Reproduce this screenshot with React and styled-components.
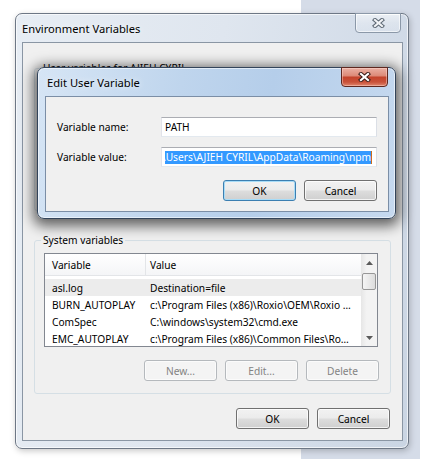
import React from "react"
import styled, { createGlobalStyle } from "styled-components"

const uiFont = `"Segoe UI", "Noto Sans", "Liberation Sans", sans-serif`

const systemVars = [
  ["asl.log", "Destination=file", true],
  ["BURN_AUTOPLAY", "c:\\Program Files (x86)\\Roxio\\OEM\\Roxio Burn\\RoxioBurnLauncher.exe"],
  ["ComSpec", "C:\\windows\\system32\\cmd.exe"],
  ["EMC_AUTOPLAY", "c:\\Program Files (x86)\\Common Files\\Roxio Shared\\OEM\\Autorun.exe"],
]

const GlobalStyle = createGlobalStyle`
  html, body {
    margin: 0;
    padding: 0;
  }
  body {
    background: #fff;
    font-family: ${uiFont};
    font-size: 10.2px;
    color: #000;
  }
`

// what shows of the desktop: white, with another window peeking behind on the right
const Desktop = styled.div`
  position: relative;
  width: 423px;
  height: 459px;
  overflow: hidden;
  background: linear-gradient(to right, #fff 0, #fff 301px, #d5dce8 301px, #d5dce8 420px, #fff 420px);
`

const WindowFrame = styled.div`
  position: absolute;
  left: ${p => p.$x}px;
  top: ${p => p.$y}px;
  width: ${p => p.$w}px;
  height: ${p => p.$h}px;
  box-sizing: border-box;
  display: flex;
  flex-direction: column;
  padding: 0 ${p => p.$pr}px ${p => p.$pb}px ${p => p.$pl}px;
  border-radius: 7px;
  border: 1px solid ${p => (p.$active ? "#33445a" : "#6d7785")};
  background: ${p =>
    p.$active
      ? "linear-gradient(100deg, #d6e5f5 0%, #bfd5ed 38%, #b5ceea 62%, #c6d9ef 100%)"
      : "linear-gradient(100deg, #e7edf4 0%, #dfe6ef 45%, #d4dde9 75%, #cad5e3 100%)"};
  box-shadow: ${p =>
    p.$active
      ? "inset 0 0 0 1px rgba(255,255,255,0.55), 0 3px 13px 4px rgba(0,0,0,0.6)"
      : "inset 0 0 0 1px rgba(255,255,255,0.65), 1px 2px 6px rgba(0,0,0,0.22)"};
`

const TitleBar = styled.div`
  flex: none;
  height: 28px;
  display: flex;
  align-items: center;
`

const Title = styled.span`
  padding-left: ${p => p.$indent || 0}px;
  font-size: 11.2px;
  color: #000;
  text-shadow: 0 0 6px rgba(255, 255, 255, 0.9);
  white-space: nowrap;
`

const CloseButton = styled.div`
  align-self: flex-start;
  margin: -1px ${p => p.$mr}px 0 auto;
  width: ${p => p.$w}px;
  height: 20px;
  box-sizing: border-box;
  display: flex;
  align-items: center;
  justify-content: center;
  border-radius: 0 0 4px 4px;
  border: 1px solid ${p => (p.$active ? "#5e2820" : "#8b98a8")};
  background: ${p =>
    p.$active
      ? "linear-gradient(#eab0a3 0%, #dd8b79 42%, #c4442c 52%, #c9523a 78%, #e0876f 100%)"
      : "linear-gradient(rgba(255,255,255,0.55), rgba(255,255,255,0.25) 50%, rgba(230,236,244,0.3) 100%)"};
  box-shadow: inset 0 0 0 1px ${p => (p.$active ? "rgba(255,220,210,0.45)" : "rgba(255,255,255,0.6)")};
`

const Client = styled.div`
  flex: 1;
  display: flex;
  flex-direction: column;
  background: #f0f0f0;
  border: 1px solid ${p => (p.$active ? "#7b8ea6" : "#8a96a4")};
  padding: ${p => p.$pad};
`

const Group = styled.fieldset`
  margin: ${p => p.$mt || 0}px 0 0 0;
  padding: 6px 12px 12px 9px;
  min-width: 0;
  border: 1px solid #d5dfe5;
  border-radius: 3px;
`

const Legend = styled.legend`
  margin-left: -3px;
  padding: 0 2px;
  line-height: 14px;
  white-space: nowrap;
`

const Filler = styled.div`
  height: ${p => p.$h}px;
`

const ListView = styled.div`
  height: 94px;
  box-sizing: border-box;
  display: flex;
  border: 1px solid #828790;
  background: #fff;
  overflow: hidden;
`

const ListMain = styled.div`
  flex: 1;
  min-width: 0;
  display: flex;
  flex-direction: column;
`

const HeaderRow = styled.div`
  flex: none;
  height: 22px;
  display: grid;
  grid-template-columns: 101px minmax(0, 1fr);
  background: linear-gradient(#ffffff, #f4f5f7);
  border-bottom: 1px solid #e3e5e8;
  box-sizing: border-box;
`

const HeaderCell = styled.div`
  display: flex;
  align-items: center;
  box-sizing: border-box;
  padding-left: ${p => p.$pl}px;
  border-right: ${p => (p.$divider ? "1px solid #e3e5e8" : "none")};
`

const Rows = styled.div`
  padding-top: 3px;
`

const Row = styled.div`
  height: 17px;
  display: grid;
  grid-template-columns: 101px minmax(0, 1fr);
  align-items: center;
  background: ${p => (p.$selected ? "#ececec" : "transparent")};
`

const Cell = styled.div`
  min-width: 0;
  padding-left: ${p => p.$pl}px;
  padding-right: 9px;
  white-space: nowrap;
  overflow: hidden;
  text-overflow: ellipsis;
`

const ScrollBar = styled.div`
  flex: none;
  width: 16px;
  display: flex;
  flex-direction: column;
  background: linear-gradient(to right, #e6e6e6, #f3f3f3 35%, #f3f3f3);
`

const ScrollArrow = styled.div`
  flex: none;
  height: 17px;
  display: flex;
  align-items: center;
  justify-content: center;
`

const ScrollThumb = styled.div`
  flex: none;
  margin: 2px 1px 0 1px;
  height: 17px;
  box-sizing: border-box;
  border: 1px solid #979797;
  border-radius: 2px;
  background: linear-gradient(to right, #f5f5f5, #e9e9e9 50%, #dcdcdc);
`

const ScrollSpace = styled.div`
  flex: 1;
`

const ButtonRow = styled.div`
  display: flex;
  justify-content: flex-end;
  gap: 8px;
  margin: ${p => p.$mt}px ${p => p.$mr || 0}px 0 0;
`

const Button = styled.button`
  width: 73px;
  height: 21px;
  box-sizing: border-box;
  padding: 0;
  font: inherit;
  color: ${p => (p.disabled ? "#838383" : "#000")};
  border-radius: 3px;
  border: 1px solid ${p => (p.disabled ? "#b5b9bd" : p.$default ? "#3c7fb1" : "#707070")};
  background: ${p =>
    p.disabled
      ? "#f4f4f4"
      : "linear-gradient(#f2f2f2 0%, #ebebeb 48%, #dddddd 52%, #cfcfcf 100%)"};
  box-shadow: inset 0 0 0 1px ${p => (p.disabled ? "#fbfbfb" : p.$default ? "#a8dcf7" : "rgba(255,255,255,0.75)")};
`

const Footer = styled.div`
  margin-top: auto;
  padding: 0 1px 11px 0;
  display: flex;
  justify-content: flex-end;
  gap: 8px;
`

const FieldGrid = styled.div`
  display: grid;
  grid-template-columns: 104px 216px;
  row-gap: 10px;
  align-items: center;
`

const Label = styled.label`
  white-space: nowrap;
`

const TextBox = styled.div`
  height: 20px;
  box-sizing: border-box;
  display: flex;
  align-items: center;
  padding: 0 ${p => (p.$end ? 4 : 2)}px 0 3px;
  background: #fff;
  border: 1px solid;
  border-color: #abadb3 #dbdfe6 #e3e9ef #e2e3ea;
  white-space: nowrap;
`

const Clip = styled.div`
  flex: 1;
  display: flex;
  justify-content: flex-end;
  overflow: hidden;
`

const Selection = styled.span`
  flex: none;
  line-height: 13px;
  background: #3399ff;
  color: #fff;
  position: relative;
  padding-right: 1px;

  &::after {
    content: "";
    position: absolute;
    right: 0;
    top: 0;
    bottom: 0;
    width: 1px;
    background: #cc6c1e;
  }
`

function CloseGlyph({ active }) {
  const d = "M3 2 L10 8 M10 2 L3 8"
  return (
    <svg width="13" height="10" viewBox="0 0 13 10">
      <path d={d} stroke={active ? "#3b1e1a" : "#5d6874"} strokeWidth="4.2" strokeLinecap="square" fill="none" />
      <path d={d} stroke={active ? "#ffffff" : "#f1f3f6"} strokeWidth="2.2" strokeLinecap="square" fill="none" />
    </svg>
  )
}

function Arrow({ up }) {
  return (
    <svg width="7" height="4" viewBox="0 0 7 4">
      <path d={up ? "M0 4 L3.5 0 L7 4 Z" : "M0 0 L7 0 L3.5 4 Z"} fill="#5a5a5a" />
    </svg>
  )
}

function SystemVariableList() {
  return (
    <ListView>
      <ListMain>
        <HeaderRow>
          <HeaderCell $pl={7} $divider>Variable</HeaderCell>
          <HeaderCell $pl={4}>Value</HeaderCell>
        </HeaderRow>
        <Rows>
          {systemVars.map(([name, value, selected]) => (
            <Row key={name} $selected={selected}>
              <Cell $pl={7}>{name}</Cell>
              <Cell $pl={4}>{value}</Cell>
            </Row>
          ))}
        </Rows>
      </ListMain>
      <ScrollBar>
        <ScrollArrow><Arrow up /></ScrollArrow>
        <ScrollThumb />
        <ScrollSpace />
        <ScrollArrow><Arrow /></ScrollArrow>
      </ScrollBar>
    </ListView>
  )
}

export default function App() {
  return (
    <Desktop>
      <GlobalStyle />

      <WindowFrame $x={15} $y={13} $w={394} $h={436} $pl={6} $pr={5} $pb={7}>
        <TitleBar>
          <Title>Environment Variables</Title>
          <CloseButton $w={46} $mr={2}>
            <CloseGlyph />
          </CloseButton>
        </TitleBar>
        <Client $pad="18px 11px 0 11px">
          <Group>
            <Legend>User variables for AJIEH CYRIL</Legend>
            <Filler $h={117} />
          </Group>

          <Group $mt={22}>
            <Legend>System variables</Legend>
            <SystemVariableList />
            <ButtonRow $mt={13} $mr={-1}>
              <Button disabled>New...</Button>
              <Button disabled>Edit...</Button>
              <Button disabled>Delete</Button>
            </ButtonRow>
          </Group>

          <Footer>
            <Button>OK</Button>
            <Button>Cancel</Button>
          </Footer>
        </Client>
      </WindowFrame>

      <WindowFrame $active $x={37} $y={67} $w={359} $h={152} $pl={7} $pr={6} $pb={6}>
        <TitleBar>
          <Title $indent={2}>Edit User Variable</Title>
          <CloseButton $active $w={47} $mr={1}>
            <CloseGlyph active />
          </CloseButton>
        </TitleBar>
        <Client $active $pad="20px 11px 10px 11px">
          <FieldGrid>
            <Label>Variable name:</Label>
            <TextBox>PATH</TextBox>
            <Label>Variable value:</Label>
            <TextBox $end>
              <Clip>
                <Selection>C:\Users\AJIEH CYRIL\AppData\Roaming\npm</Selection>
              </Clip>
            </TextBox>
          </FieldGrid>
          <ButtonRow $mt={13}>
            <Button $default>OK</Button>
            <Button>Cancel</Button>
          </ButtonRow>
        </Client>
      </WindowFrame>
    </Desktop>
  )
}
